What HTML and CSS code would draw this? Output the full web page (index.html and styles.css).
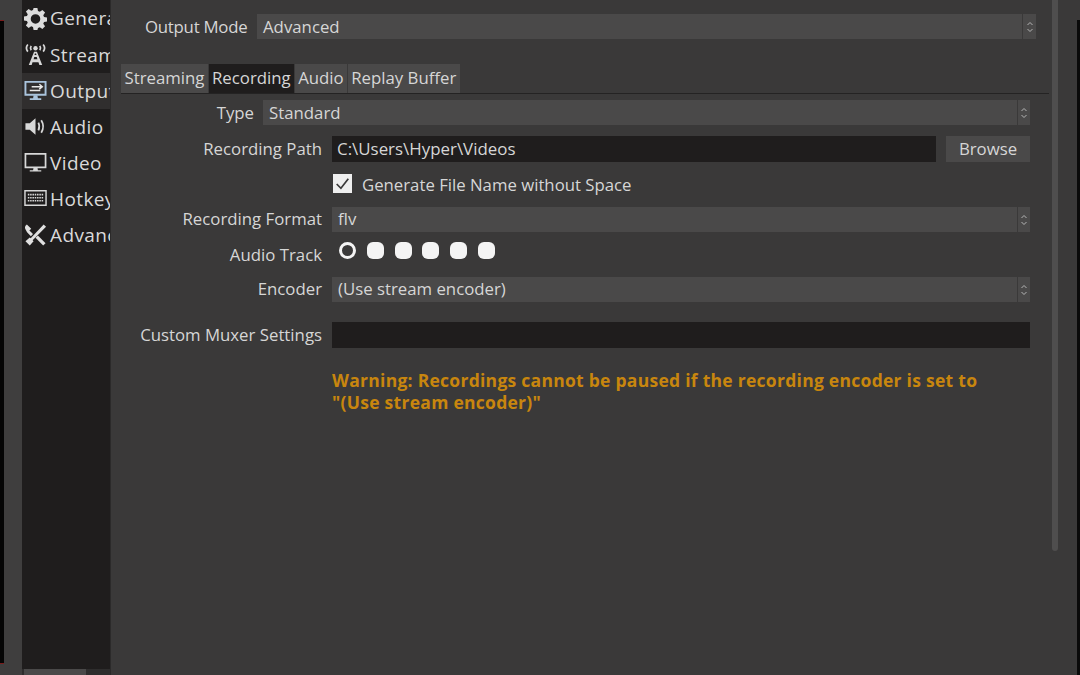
FILE: index.html
```html
<!DOCTYPE html>
<html lang="en">
<head>
<meta charset="utf-8">
<title>Settings - Output</title>
<link rel="stylesheet" href="styles.css">
</head>
<body>
<div class="window">
  <div class="edge"><div class="edge-black"></div></div>
  <nav class="sidebar">
    <div class="nav-item">
      <svg class="icon" viewBox="0 0 24 24"><path fill="#dcdcdc" fill-rule="evenodd" d="M10 1h4l.6 3.100 1.900.8L19.200 3 22 5.800l-1.900 2.700.8 1.900 3.100.6v4l-3.100.6-.8 1.900 1.900 2.700-2.800 2.800-2.700-1.900-1.900.8L14 24h-4l-.6-3.100-1.900-.8L4.800 22 2 19.200l1.900-2.700-.8-1.900L0 14v-4l3.100-.6.8-1.900L2 4.800 4.800 2l2.700 1.900 1.900-.8z M12 7.500a5 5 0 1 0 0 10 5 5 0 0 0 0-10z"/></svg>
      <span>General</span>
    </div>
    <div class="nav-item">
      <svg class="icon" viewBox="0 0 24 24"><g fill="none" stroke="#d8d8d8" stroke-width="1.800"><path d="M4 1.500Q1 5 4 9"/><path d="M20 1.500Q23 5 20 9"/><path d="M7.500 3Q6 5.200 7.500 7.500"/><path d="M16.500 3Q18 5.200 16.500 7.500"/></g><circle cx="12" cy="5.500" r="2.300" fill="#d8d8d8"/><path fill="#d8d8d8" fill-rule="evenodd" d="M10.500 9h3L19 23h-3l-.9-3H8.900L8 23H5zM10 17h4l-.7-2.500h-2.600zM11 12.500h2l-.4-1.500h-1.200z"/></svg>
      <span>Stream</span>
    </div>
    <div class="nav-item is-active">
      <svg class="icon" viewBox="0 0 24 24"><path fill="none" stroke="#a9c3dc" stroke-width="2" d="M1.500 3h21v13.500h-21z"/><path fill="#a9c3dc" d="M10 17h4l.5 3H18v2H6v-2h3.500z"/><path fill="none" stroke="#e8e8e8" stroke-width="1.600" d="M8 8h11M16 5.500 19 8l-3 2.500M17 12H6"/></svg>
      <span>Output</span>
    </div>
    <div class="nav-item">
      <svg class="icon" viewBox="0 0 24 24"><path fill="#d8d8d8" d="M1.500 8.500H6L12 3.500v17l-6-5H1.500z"/><path fill="none" stroke="#d8d8d8" stroke-width="1.800" d="M15 8q2 4 0 8M18 5.500q4 6.500 0 13"/></svg>
      <span>Audio</span>
    </div>
    <div class="nav-item">
      <svg class="icon" viewBox="0 0 24 24"><path fill="none" stroke="#d8d8d8" stroke-width="1.800" d="M1.500 3h21v14h-21z"/><path fill="#d8d8d8" d="M10 17h4l.5 3H18v1.500H6V20h3.500z"/></svg>
      <span>Video</span>
    </div>
    <div class="nav-item">
      <svg class="icon" viewBox="0 0 24 24"><path fill="none" stroke="#d8d8d8" stroke-width="1.500" d="M1 4h22v15H1z"/><path fill="none" stroke="#d8d8d8" stroke-width="1.700" stroke-dasharray="1.600 .8" d="M4 8h16M4 11.200h16M4 14.400h16"/></svg>
      <span>Hotkeys</span>
    </div>
    <div class="nav-item">
      <svg class="icon" viewBox="0 0 24 24"><path fill="#e0e0e0" d="M3 1.500 7.500 6 6 7.500l-.6 0 4 4-2.200 2.200-4-4L1.500 6.500C.5 4.500 1 3 3 1.500z"/><path fill="#e0e0e0" d="M20.500 1.500 23 4 9 18l1 1-4 4.500L1.500 19 6 15l1 1z"/><path fill="#e0e0e0" d="m14.500 13 8 8-2.500 2.500-8-8z"/></svg>
      <span>Advanced</span>
    </div>
    <div class="side-scroll"><div class="side-thumb"></div></div>
  </nav>
  <main class="main">
    <div class="mode-row">
      <label class="label">Output Mode</label>
      <div class="combo combo-mode"><span class="combo-text">Advanced</span><span class="spin"><svg viewBox="0 0 8 14"><path fill="none" stroke="#b5b5b5" d="M1.500 5 4 2.500 6.500 5M1.500 9 4 11.500 6.500 9"/></svg></span></div>
    </div>
    <div class="tabs">
      <div class="tab">Streaming</div>
      <div class="tab is-active">Recording</div>
      <div class="tab">Audio</div>
      <div class="tab">Replay Buffer</div>
    </div>
    <div class="type-row">
      <label class="label">Type</label>
      <div class="combo"><span class="combo-text">Standard</span><span class="spin"><svg viewBox="0 0 8 14"><path fill="none" stroke="#b5b5b5" d="M1.500 5 4 2.500 6.500 5M1.500 9 4 11.500 6.500 9"/></svg></span></div>
    </div>
    <div class="form">
      <label class="label">Recording Path</label>
      <div class="path-field">
        <div class="input">C:\Users\Hyper\Videos</div>
        <div class="button">Browse</div>
      </div>
      <div class="check-row">
        <span class="checkbox"><svg viewBox="0 0 18 18"><path fill="none" stroke="#3a3939" stroke-width="1.600" d="M3.500 9.500 7.500 13.500 14.500 4.500"/></svg></span>
        <span class="check-text">Generate File Name without Space</span>
      </div>
      <label class="label">Recording Format</label>
      <div class="combo"><span class="combo-text">flv</span><span class="spin"><svg viewBox="0 0 8 14"><path fill="none" stroke="#b5b5b5" d="M1.500 5 4 2.500 6.500 5M1.500 9 4 11.500 6.500 9"/></svg></span></div>
      <label class="label label-track">Audio Track</label>
      <div class="tracks">
        <span class="track is-on"></span><span class="track"></span><span class="track"></span><span class="track"></span><span class="track"></span><span class="track"></span>
      </div>
      <label class="label">Encoder</label>
      <div class="combo"><span class="combo-text">(Use stream encoder)</span><span class="spin"><svg viewBox="0 0 8 14"><path fill="none" stroke="#b5b5b5" d="M1.500 5 4 2.500 6.500 5M1.500 9 4 11.500 6.500 9"/></svg></span></div>
      <label class="label label-muxer">Custom Muxer Settings</label>
      <div class="input input-muxer"></div>
      <p class="warning">Warning: Recordings cannot be paused if the recording encoder is set to<br>"(Use stream encoder)"</p>
    </div>
    <div class="main-scroll"></div>
    <div class="right-edge"></div>
  </main>
</div>
</body>
</html>
```
FILE: styles.css
```css
* { box-sizing: border-box; }
html, body { margin: 0; height: 100%; overflow: hidden; background: #3a3939; }
body { font-family: "Open Sans", "Noto Sans", sans-serif; font-size: 16.800px; color: #d6d6d6; }

.window { display: flex; width: 1080px; height: 675px; overflow: hidden; }

.edge { flex: 0 0 22px; padding-top: 20px; background: #3f3e3e; }
.edge-black { width: 4px; height: 644px; background: #050505; border-top: 1px solid #7a1c1c; border-bottom: 1px solid #7a1c1c; }

.sidebar { position: relative; flex: 0 0 89px; height: 675px; background: #1f1d1d; overflow: hidden; border-right: 1px solid #2b2a2a; }
.nav-item { display: flex; align-items: center; gap: 3px; height: 36px; padding-left: 2px; font-size: 19px; letter-spacing: .4px; white-space: nowrap; color: #d9d9d9; }
.nav-item:first-child { height: 36.500px; }
.nav-item.is-active { background: #302e2e; }
.icon { flex: 0 0 23px; width: 23px; height: 23px; }
.side-scroll { position: absolute; left: 0; right: 0; bottom: 0; height: 6px; background: #2e2d2d; }
.side-thumb { width: 62px; height: 6px; margin-left: 2px; background: #4a4949; }

.main { position: relative; flex: 1; padding: 14px 0 0 10px; background: #3a3939; }

.label { color: #d6d6d6; white-space: nowrap; }

.mode-row { display: flex; align-items: center; gap: 10px; height: 25px; margin-left: 24px; width: 891px; }
.mode-row .label { flex: 0 0 102px; min-width: 0; letter-spacing: -.25px; }
.combo { position: relative; display: flex; align-items: center; justify-content: space-between; height: 25px; background: #4a4949; color: #d6d6d6; }
.mode-row .combo { flex: 1; }
.mode-row .spin { flex-basis: 14px; }
.combo-text { padding-left: 6px; }
.spin { display: flex; align-items: center; justify-content: center; flex: 0 0 13px; height: 100%; border-left: 1px solid #3a3939; }
.spin svg { width: 8px; height: 14px; }

.tabs { display: flex; gap: 1px; height: 30px; margin-top: 25px; width: 928px; border-bottom: 1px solid #242323; }
.tab { display: flex; align-items: center; height: 29px; padding: 0 3.500px 2px 3px; background: #4a4949; color: #d6d6d6; }
.tab:first-child { padding-left: 3.500px; }
.tab.is-active { background: #1f1d1d; }

.type-row { display: grid; grid-template-columns: 133px 767px; column-gap: 9px; align-items: center; height: 25px; margin-top: 6px; }
.type-row .label { text-align: right; }

.form { display: grid; grid-template-columns: 191px 698px; column-gap: 10px; align-items: center; margin-top: 11px; margin-left: 10px; }
.form > .label { text-align: right; padding-bottom: 2px; }
.form > * { margin-bottom: 10px; }
.form .combo-text { padding-bottom: 2px; }

.path-field { display: flex; gap: 10px; }
.input { flex: 1; height: 26px; padding-left: 5px; line-height: 25px; font-size: 16.900px; background: #1f1d1d; color: #d6d6d6; }
.button { display: flex; align-items: center; justify-content: center; flex: 0 0 84px; height: 26px; padding-bottom: 2px; background: #4a4949; color: #d6d6d6; }

.check-row { grid-column: 2; display: flex; align-items: center; gap: 10px; height: 19px; margin-left: 1px; font-size: 16.750px; margin-bottom: 14px; margin-top: 2px; }
.check-text { padding-top: 2px; }
.checkbox { display: block; width: 19px; height: 19px; background: #efefef; }
.checkbox svg { display: block; width: 19px; height: 19px; }

.form > .label-track { margin-bottom: 11px; padding-bottom: 0; padding-top: 1px; }
.tracks { display: flex; gap: 10.800px; height: 17px; padding-left: 7px; margin-bottom: 18px; margin-top: 0; }
.track { width: 17px; height: 17px; border-radius: 6px; background: #f4f4f4; }
.track.is-on { border-radius: 50%; background: #3a3939; border: 3px solid #f4f4f4; }

.form > .label-muxer, .form > .input-muxer { margin-top: 10px; margin-bottom: 0; }
.warning { grid-column: 2; margin: 21px 0 0; font-weight: 700; font-size: 17.500px; letter-spacing: .27px; line-height: 22px; color: #c8860e; white-space: nowrap; }

.main-scroll { position: absolute; top: 0; left: 941px; width: 6px; height: 551px; border-radius: 0 0 3px 3px; background: #4f4e4e; }
.right-edge { position: absolute; top: 20px; right: 0; bottom: 0; width: 3px; background: #0a0a0a; }
```
